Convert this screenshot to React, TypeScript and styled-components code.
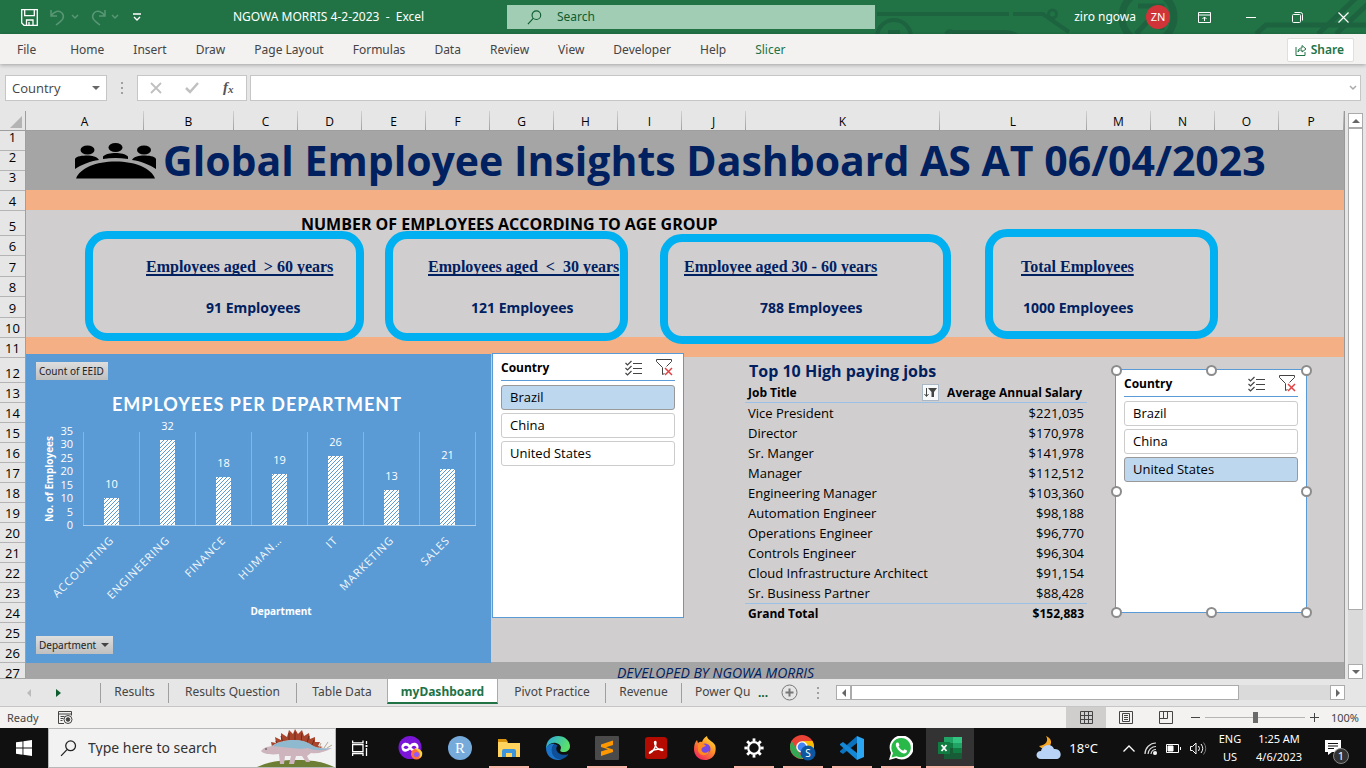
import React from 'react';
import styled, { createGlobalStyle, css } from 'styled-components';

const UI = '"Noto Sans", "Open Sans", "Liberation Sans", sans-serif';
const CELL = '"Open Sans", "Noto Sans", "Liberation Sans", sans-serif';
const NAVY = '#002060';
const BLUE = '#5b9bd5';
const GREEN = '#217346';

const GlobalStyle = createGlobalStyle`
  *, *::before, *::after { box-sizing: border-box; }
  body { margin: 0; font: 12px/16px ${UI}; color: #444; }
  button, input { font: inherit; color: inherit; }
  button { padding: 0; border: 0; background: none; cursor: pointer; }
  a { color: inherit; text-decoration: none; }
  svg { display: block; flex: none; }
  h1, h2, p, ul { margin: 0; padding: 0; }
`;

const App = styled.div`
  display: flex;
  flex-direction: column;
  height: 100vh;
  overflow: hidden;
  background: #e6e6e6;
`;

/* ---------- title bar ---------- */
const TitleBar = styled.header`
  position: relative;
  flex: none;
  display: grid;
  grid-template-columns: 507fr 368fr 491fr;
  align-items: center;
  height: 34px;
  background: ${GREEN};
  color: #fff;
`;
const Circuit = styled.svg`
  position: absolute;
  right: 0;
  top: 0;
`;
const QuickAccess = styled.div`
  display: flex;
  align-items: center;
  padding-left: 21px;
`;
const IconButton = styled.button<{ $gap?: number; $dim?: boolean }>`
  display: flex;
  align-items: center;
  justify-content: center;
  margin-left: ${(p) => p.$gap || 0}px;
  opacity: ${(p) => (p.$dim ? 0.25 : 1)};
`;
const DocTitle = styled.div`
  flex: 1;
  padding-left: 92px;
  white-space: pre;
  line-height: 32px;
  font-size: 12px;
`;
const SearchBox = styled.label`
  position: relative;
  display: flex;
  align-items: center;
  height: 24px;
  padding-left: 20px;
  gap: 13px;
  background: #a0cdb4;
  color: #0e5c2f;
`;
const SearchInput = styled.input`
  flex: 1;
  min-width: 0;
  border: 0;
  outline: 0;
  background: none;
  &::placeholder { color: #0e5c2f; opacity: 1; }
`;
const UserArea = styled.div`
  position: relative;
  display: flex;
  align-items: center;
  justify-content: flex-end;
  padding-right: 17px;
`;
const Avatar = styled.span`
  width: 24px;
  height: 24px;
  margin: 0 28px 0 10px;
  border-radius: 50%;
  background: #d13438;
  font-size: 11px;
  line-height: 24px;
  text-align: center;
`;
const WindowButtons = styled.div`
  display: flex;
  align-items: center;
  gap: 35px;
`;

/* ---------- ribbon tabs ---------- */
const Ribbon = styled.nav`
  position: relative;
  flex: none;
  display: flex;
  align-items: center;
  height: 30px;
  padding: 1px 12px 0 17px;
  background: #f3f2f1;
  box-shadow: 0 1px 4px rgba(0, 0, 0, 0.3);
  font-size: 12px;
`;
const RibbonTab = styled.a<{ $accent?: boolean; $first?: boolean }>`
  margin-right: ${(p) => (p.$first ? 34 : 29)}px;
  color: ${(p) => (p.$accent ? GREEN : '#444')};
`;
const ShareButton = styled.button`
  display: flex;
  align-items: center;
  gap: 4px;
  height: 24px;
  margin-left: auto;
  padding: 0 9px 0 7px;
  border: 1px solid #e1dfdd;
  border-radius: 2px;
  background: #fff;
  color: ${GREEN};
  font-weight: 600;
`;

/* ---------- formula bar ---------- */
const FormulaBar = styled.div`
  flex: none;
  display: flex;
  align-items: center;
  height: 47px;
  padding: 1px 5px 0;
`;
const Boxed = css`
  display: flex;
  align-items: center;
  height: 26px;
  border: 1px solid #c6c6c6;
  background: #fff;
`;
const NameBox = styled.div`
  ${Boxed}
  width: 102px;
  padding: 0 6px;
`;
const NameInput = styled.input`
  flex: 1;
  min-width: 0;
  padding: 0;
  border: 0;
  outline: 0;
  font-family: ${CELL};
  font-size: 13px;
`;
const Dots = styled.svg`
  margin: 0 13px;
`;
const FxBox = styled.div`
  ${Boxed}
  width: 110px;
  justify-content: space-between;
  padding: 0 11px;
  margin-right: 3px;
`;
const FormulaField = styled.div`
  ${Boxed}
  flex: 1;
  padding-right: 3px;
`;
const FormulaInput = styled.input`
  flex: 1;
  border: 0;
  outline: 0;
  background: none;
`;

/* ---------- sheet ---------- */
const Workspace = styled.main`
  flex: 1;
  min-height: 0;
  display: grid;
  grid-template-columns: 1fr 21px;
`;
const Sheet = styled.div`
  min-width: 0;
  min-height: 0;
  display: grid;
  grid-template: 20px 1fr / 26px 1fr;
  overflow: hidden;
  border-right: 1px solid #999;
  border-bottom: 1px solid #a6a6a6;
  color: #000;
  font-family: ${CELL};
  font-size: 13px;
`;
const Corner = styled.div`
  display: flex;
  justify-content: flex-end;
  align-items: flex-end;
  padding: 0 3px 2px;
  border-right: 1px solid #9f9f9f;
  border-bottom: 1px solid #9f9f9f;
`;
const ColumnHeads = styled.div`
  display: grid;
  grid-template-columns: 118px 90px repeat(8, 64px) 194px 147px repeat(3, 64px) minmax(64px, 1fr);
  border-bottom: 1px solid #9f9f9f;
  font-size: 12px;
`;
const ColumnHead = styled.div`
  text-align: center;
  line-height: 21px;
  border-right: 1px solid;
  border-image: linear-gradient(#d4d4d4, #999) 1;
`;
const RowHeads = styled.div`
  min-height: 0;
  overflow: hidden;
  border-right: 1px solid #9f9f9f;
`;
const RowHead = styled.div<{ $h: number; $raised?: boolean }>`
  display: flex;
  align-items: flex-end;
  justify-content: center;
  height: ${(p) => p.$h}px;
  padding-bottom: ${(p) => (p.$raised ? 7 : 0)}px;
  border-top: 1px solid #b4b4b4;
  line-height: ${(p) => (p.$raised ? 12 : 18)}px;
  &:first-child { border-top: 0; }
`;
const Canvas = styled.div`
  min-width: 0;
  min-height: 0;
  display: flex;
  flex-direction: column;
  overflow: hidden;
  background: #d0cece;
`;
const TitleBand = styled.div`
  flex: none;
  display: flex;
  align-items: center;
  gap: 7px;
  height: 59px;
  padding-left: 49px;
  background: #a5a5a5;
`;
const SheetTitle = styled.h1`
  color: ${NAVY};
  font: bold 41px/59px ${CELL};
  white-space: nowrap;
`;
const AccentBand = styled.div`
  flex: none;
  height: 20px;
  background: #f4b084;
`;
const AgeSection = styled.section`
  position: relative;
  z-index: 1;
  flex: none;
  height: 127px;
`;
const AgeHeading = styled.h2`
  height: 21px;
  padding-left: 275px;
  font: bold 16px/28px ${CELL};
  white-space: nowrap;
`;
const AgeCards = styled.div`
  display: flex;
  padding-left: 59px;
`;
const AgeCard = styled.div<{ $w: number; $gap: number; $drop: number }>`
  position: relative;
  flex: none;
  width: ${(p) => p.$w}px;
  height: 110px;
  margin-right: ${(p) => p.$gap}px;
  padding-top: 26px;
  color: ${NAVY};
  white-space: pre;
  &::before {
    content: '';
    position: absolute;
    top: ${(p) => p.$drop}px;
    left: 0;
    width: 100%;
    height: 100%;
    border: 8px solid #00b0f0;
    border-radius: 22px;
  }
`;
const AgeLabel = styled.p<{ $x: number }>`
  padding-left: ${(p) => p.$x}px;
  font: bold 16px/20px "Liberation Serif", serif;
  text-decoration: underline;
  text-decoration-thickness: 2px;
  text-underline-offset: 2px;
  text-decoration-skip-ink: none;
`;
const AgeValue = styled.p<{ $x: number }>`
  margin-top: 21px;
  padding-left: ${(p) => p.$x}px;
  font: bold 14px/20px ${CELL};
`;
const Board = styled.section`
  position: relative;
  z-index: 1;
  flex: none;
  display: flex;
  align-items: flex-start;
  height: 305px;
`;
const ChartPanel = styled.figure`
  position: relative;
  flex: none;
  width: 465px;
  height: 309px;
  margin: -3px 1px 0 0;
  background: ${BLUE};
`;
const FieldButton = styled.button<{ $bottom?: boolean }>`
  position: absolute;
  left: 10px;
  ${(p) => (p.$bottom ? 'bottom: 9px' : 'top: 8px')};
  display: flex;
  align-items: center;
  gap: 5px;
  height: 18px;
  padding: 0 4px 0 3px;
  background: linear-gradient(#dedede, #bfbfbf);
  color: #222;
  font: 10px/18px ${UI};
`;
const SlicerPanel = styled.section<{ $h: number; $top: number }>`
  position: relative;
  flex: none;
  width: 192px;
  height: ${(p) => p.$h}px;
  margin-top: ${(p) => p.$top}px;
  padding: 0 8px;
  border: 1px solid ${BLUE};
  background: #fff;
`;
const SlicerHead = styled.header`
  display: flex;
  align-items: center;
  height: 27px;
  margin-bottom: 4px;
  padding-top: 1px;
  border-bottom: 1px solid ${BLUE};
`;
const SlicerTitle = styled.h2`
  flex: 1;
  font: bold 12px/26px ${CELL};
`;
const SlicerItem = styled.button<{ $on?: boolean }>`
  display: block;
  width: 100%;
  height: 25px;
  margin-bottom: 3px;
  padding: 0 0 2px 8px;
  border: 1px solid ${(p) => (p.$on ? '#999' : '#ccc')};
  border-radius: 3px;
  background: ${(p) => (p.$on ? '#bdd7ee' : '#fff')};
  text-align: left;
  line-height: 20px;
`;
const Handle = styled.i<{ $x: string; $y: string }>`
  position: absolute;
  left: ${(p) => p.$x};
  top: ${(p) => p.$y};
  width: 11px;
  height: 11px;
  margin: -5px 0 0 -5px;
  border: 2px solid #8c8c8c;
  border-radius: 50%;
  background: #fff;
`;
const Pivot = styled.table`
  flex: none;
  width: 342px;
  margin: 0 28px 0 61px;
  border-collapse: collapse;
  table-layout: fixed;
  caption {
    height: 25px;
    padding-left: 4px;
    color: ${NAVY};
    font: bold 16px/28px ${CELL};
    text-align: left;
  }
  th, td {
    height: 20px;
    padding: 1px 3px 0;
    line-height: 19px;
    text-align: left;
    white-space: nowrap;
  }
  th { font-size: 12px; }
  td + td, tfoot th + td { text-align: right; }
  thead th { border-bottom: 1px solid #9bc2e6; }
  tfoot tr > * { border-top: 1px solid #9bc2e6; font-size: 12px; font-weight: bold; padding-top: 0; }
`;
const PivotHead = styled.div`
  display: flex;
  align-items: center;
  justify-content: space-between;
  margin-right: 2px;
`;
const FilterButton = styled.button`
  width: 17px;
  height: 17px;
  display: flex;
  align-items: center;
  justify-content: center;
  border: 1px solid #aab7c4;
  background: #f6f8fa;
`;
const CreditBand = styled.div`
  flex: 1;
  min-height: 0;
  padding-left: 591px;
  background: #a5a5a5;
  color: ${NAVY};
  font: italic 14px/22px ${CELL};
  white-space: nowrap;
`;

/* ---------- scroll bars ---------- */
const VScroll = styled.div`
  display: flex;
  flex-direction: column;
  width: 15px;
  margin: 2px 0 0 3px;
`;
const HScroll = styled.div`
  display: flex;
  flex: 1;
  height: 15px;
`;
const ScrollButton = styled.button`
  flex: none;
  width: 15px;
  height: 15px;
  display: flex;
  align-items: center;
  justify-content: center;
  border: 1px solid #ababab;
  background: #fff;
`;
const Track = styled.div`
  flex: 1;
  display: flex;
  background: #dadada;
`;
const VThumb = styled.div`
  width: 100%;
  height: 90%;
  border: 1px solid #ababab;
  background: #fff;
`;
const HThumb = styled.div`
  width: 81%;
  border: 1px solid #ababab;
  background: #fff;
`;

/* ---------- sheet tabs and status ---------- */
const TabStrip = styled.nav`
  flex: none;
  display: flex;
  align-items: center;
  height: 28px;
  padding-right: 21px;
  border-bottom: 1px solid #c6c6c6;
`;
const TabNav = styled.div`
  display: flex;
  align-items: center;
  gap: 25px;
  width: 100px;
  padding-left: 27px;
`;
const SheetTab = styled.a<{ $w: number; $active?: boolean; $bare?: boolean }>`
  flex: none;
  width: ${(p) => p.$w}px;
  height: 20px;
  border-left: 1px solid ${(p) => (p.$bare ? 'transparent' : '#9f9f9f')};
  text-align: center;
  line-height: 18px;
  white-space: nowrap;
  ${(p) => p.$active && css`
    align-self: flex-start;
    height: 25px;
    border-left: 1px solid #ababab;
    border-right: 1px solid #ababab;
    border-bottom: 2px solid ${GREEN};
    background: #fff;
    color: ${GREEN};
    font-weight: bold;
    line-height: 25px;
  `}
`;
const LastTab = styled(SheetTab)`
  padding-left: 13px;
  text-align: left;
`;
const TabMore = styled.button`
  margin: 0 13px 0 8px;
  color: #0f5c30;
  font-weight: bold;
`;
const StatusBar = styled.footer`
  flex: none;
  display: flex;
  align-items: center;
  height: 21px;
  padding: 0 7px;
  background: #f3f2f1;
  font-size: 11px;
`;
const Spacer = styled.div`
  flex: 1;
`;
const ViewButton = styled.button<{ $on?: boolean }>`
  display: flex;
  align-items: center;
  justify-content: center;
  width: 40px;
  height: 21px;
  background: ${(p) => (p.$on ? '#cfcecd' : 'none')};
`;
const ZoomButton = styled.button`
  width: 19px;
  display: flex;
  align-items: center;
  justify-content: center;
`;
const ZoomSlider = styled.input`
  appearance: none;
  width: 100px;
  height: 13px;
  margin: 0;
  background: linear-gradient(#b5b5b5, #b5b5b5) center / 100% 1px no-repeat;
  &::-webkit-slider-thumb {
    appearance: none;
    width: 5px;
    height: 11px;
    background: #6a6a6a;
  }
`;
const ZoomValue = styled.span`
  width: 35px;
  text-align: right;
`;

/* ---------- taskbar ---------- */
const Taskbar = styled.footer`
  flex: none;
  display: flex;
  align-items: stretch;
  height: 40px;
  background: #101010;
  color: #fff;
`;
const StartButton = styled.button`
  width: 48px;
  display: flex;
  align-items: center;
  justify-content: center;
`;
const TaskSearch = styled.label`
  display: flex;
  align-items: center;
  width: 288px;
  padding-left: 11px;
  gap: 11px;
  border: 1px solid #b8b8b8;
  background: #f2f2f2;
  color: #222;
`;
const TaskInput = styled.input`
  flex: 1;
  min-width: 0;
  padding: 0;
  border: 0;
  outline: 0;
  background: none;
  font-size: 14px;
  &::placeholder { color: #333; opacity: 1; }
`;
const TaskApps = styled.div`
  display: flex;
  gap: 1px;
`;
const TaskApp = styled.button<{ $open?: boolean; $active?: boolean; $gap?: boolean }>`
  position: relative;
  display: flex;
  align-items: center;
  justify-content: center;
  width: 48px;
  margin-right: ${(p) => (p.$gap ? 2 : 0)}px;
  background: ${(p) => (p.$active ? '#333' : 'none')};
  &::after {
    content: '';
    position: absolute;
    bottom: 0;
    left: ${(p) => (p.$active ? 0 : 4)}px;
    right: ${(p) => (p.$active ? 0 : 4)}px;
    height: 2px;
    background: ${(p) => (p.$open || p.$active ? '#f7b5a8' : 'transparent')};
  }
`;
const Tray = styled.div`
  display: flex;
  align-items: center;
  margin-left: auto;
  padding-right: 24px;
`;
const Weather = styled.button`
  display: flex;
  align-items: center;
  gap: 8px;
  margin-right: 25px;
  font-size: 13px;
`;
const TrayIcons = styled.div`
  display: flex;
  align-items: center;
  gap: 9px;
  margin-right: 10px;
`;
const TrayText = styled.div<{ $w: number }>`
  width: ${(p) => p.$w}px;
  font-size: 11px;
  line-height: 18px;
  text-align: center;
  white-space: nowrap;
`;
const Notice = styled.button`
  position: relative;
  margin-left: 10px;
`;
const NoticeCount = styled.span`
  position: absolute;
  left: 8px;
  top: 8px;
  width: 16px;
  height: 16px;
  border: 1px solid #888;
  border-radius: 50%;
  background: #333;
  font-size: 11px;
  line-height: 14px;
`;

/* ---------- data ---------- */
const MENU = ['File', 'Home', 'Insert', 'Draw', 'Page Layout', 'Formulas', 'Data', 'Review', 'View', 'Developer', 'Help', 'Slicer'];
const COLUMNS = 'ABCDEFGHIJKLMNOP'.split('');
const ROW_HEIGHTS = [19, 20, 20, 20, 25, 20, 21, 20, 21, 20, 20, 25, ...Array(14).fill(20), 20];
const AGE_CARDS = [
  { label: 'Employees aged  > 60 years', value: '91 Employees', w: 279, gap: 21, drop: 0, lx: 61, vx: 121 },
  { label: 'Employees aged  <  30 years', value: '121 Employees', w: 243, gap: 32, drop: 0, lx: 43, vx: 86 },
  { label: 'Employee aged 30 - 60 years', value: '788 Employees', w: 291, gap: 34, drop: 3, lx: 24, vx: 100 },
  { label: 'Total Employees', value: '1000 Employees', w: 233, gap: 0, drop: -2, lx: 36, vx: 38 },
];
const JOBS = [
  ['Vice President', '$221,035'], ['Director', '$170,978'], ['Sr. Manger', '$141,978'], ['Manager', '$112,512'],
  ['Engineering Manager', '$103,360'], ['Automation Engineer', '$98,188'], ['Operations Engineer', '$96,770'],
  ['Controls Engineer', '$96,304'], ['Cloud Infrastructure Architect', '$91,154'], ['Sr. Business Partner', '$88,428'],
];
const DEPARTMENTS: [string, number][] = [
  ['ACCOUNTING', 10], ['ENGINEERING', 32], ['FINANCE', 18], ['HUMAN…', 19], ['IT', 26], ['MARKETING', 13], ['SALES', 21],
];
const SHEETS = [
  { name: 'Results', w: 68 }, { name: 'Results Question', w: 128 }, { name: 'Table Data', w: 91 },
  { name: 'myDashboard', w: 111, active: true }, { name: 'Pivot Practice', w: 107, bare: true },
  { name: 'Revenue', w: 76 },
];

/* ---------- drawings ---------- */
const Arrow = ({ dir, color = '#666' }: { dir: 'up' | 'down' | 'left' | 'right'; color?: string }) => {
  const d = { up: 'M0 6L4 2L8 6Z', down: 'M0 2L4 6L8 2Z', left: 'M6 0L2 4L6 8Z', right: 'M2 0L6 4L2 8Z' }[dir];
  return <svg width="8" height="8"><path d={d} fill={color} /></svg>;
};
const Chevron = ({ color = 'currentColor' }) => (
  <svg width="8" height="6" fill="none" stroke={color} strokeWidth="1.5"><path d="M1 1l3 3l3-3" /></svg>
);
const Magnifier = ({ size }: { size: number }) => (
  <svg width={size} height={size} viewBox="0 0 16 16" fill="none" stroke="currentColor" strokeWidth="1.2">
    <circle cx="10" cy="5.5" r="4.6" /><path d="M6.6 9L1 15" />
  </svg>
);

function SlicerIcons() {
  return (
    <>
      <IconButton aria-label="Multi-select">
        <svg width="17" height="16" fill="none" stroke="#444">
          <path d="M8 3.5h9M8 8.5h9M8 13.5h9" />
          <path d="M.5 3l2 2l4-4M.5 8l2 2l4-4M.5 13l2 2l4-4" strokeWidth="1.2" />
        </svg>
      </IconButton>
      <IconButton aria-label="Clear filter" $gap={14}>
        <svg width="19" height="17" fill="none" stroke="#444">
          <path d="M.5 .5h15v2l-5 5M.5 2.5l6 6v7M.5 .5v2M6.5 15.5l2-1" />
          <path d="M9 9l7 7M16 9l-7 7" stroke="#e04343" strokeWidth="1.5" />
        </svg>
      </IconButton>
    </>
  );
}

function Slicer({ height, top, selected, handles }: { height: number; top: number; selected: string; handles?: boolean }) {
  return (
    <SlicerPanel $h={height} $top={top}>
      <SlicerHead>
        <SlicerTitle>Country</SlicerTitle>
        <SlicerIcons />
      </SlicerHead>
      {['Brazil', 'China', 'United States'].map((name) => (
        <SlicerItem key={name} $on={name === selected}>{name}</SlicerItem>
      ))}
      {handles && ['0%', '50%', '100%'].map((y) => ['0%', '50%', '100%'].map((x) => (
        x === '50%' && y === '50%' ? null : <Handle key={x + y} $x={x} $y={y} />
      )))}
    </SlicerPanel>
  );
}

function DepartmentChart() {
  const base = 171;
  return (
    <ChartPanel>
      <svg width="465" height="309" fontFamily={CELL} fill="#fff">
        <defs>
          <pattern id="hatch" width="4" height="4" patternUnits="userSpaceOnUse">
            <rect width="4" height="4" fill="#fff" />
            <path d="M-1 1L1 -1M0 4L4 0M3 5L5 3" stroke={BLUE} />
          </pattern>
        </defs>
        <text x="231" y="57" textAnchor="middle" fontFamily="Lato" fontSize="18" fontWeight="bold" letterSpacing="1">EMPLOYEES PER DEPARTMENT</text>
        {Array.from({ length: 8 }, (_, i) => (
          <path key={i} d={`M${57.5 + i * 56} 78V${base}`} stroke="#84b4e0" />
        ))}
        <path d={`M57 ${base + 0.5}H450`} stroke="#b0cfeb" />
        {[0, 5, 10, 15, 20, 25, 30, 35].map((n) => (
          <text key={n} x="47" y={175 - n * 2.69} textAnchor="end" fontSize="11">{n}</text>
        ))}
        {DEPARTMENTS.map(([name, n], i) => {
          const cx = 85.5 + i * 56;
          const h = Math.round(n * 2.67);
          return (
            <g key={name}>
              <rect x={cx - 7.5} y={base - h} width="15" height={h} fill="url(#hatch)" />
              <text x={cx} y={base - h - 10} textAnchor="middle" fontSize="11">{n}</text>
              <text transform={`translate(${cx + 3} 187) rotate(-45)`} textAnchor="end" fontSize="11" letterSpacing="1" fill="#f2f7fc">{name}</text>
            </g>
          );
        })}
        <text transform="translate(27 125) rotate(-90)" textAnchor="middle" fontSize="10" fontWeight="bold">No. of Employees</text>
        <text x="255" y="261" textAnchor="middle" fontSize="10" fontWeight="bold">Department</text>
      </svg>
      <FieldButton>Count of EEID</FieldButton>
      <FieldButton $bottom>Department <Arrow dir="down" color="#444" /></FieldButton>
    </ChartPanel>
  );
}

const PeopleIcon = () => (
  <svg width="81" height="38">
    <ellipse cx="12.5" cy="8" rx="7" ry="4.6" /><ellipse cx="40.5" cy="5.5" rx="7" ry="4.6" /><ellipse cx="69" cy="8" rx="7" ry="4.6" />
    <path d="M0 17C1 14 8 13.500 12 13.500C17 13.500 22 14.500 24 18C15 19 6 23 0 27ZM81 17C80 14 73 13.500 69 13.500C64 13.500 59 14.500 57 18C66 19 75 23 81 27ZM28 17V14.500C30 12 36 11 40.500 11S51 12 53 14.500V17Q40 15 28 17Z" />
    <path d="M1 36.500C5 26 21 19.500 40.500 19.500S76 26 80 36.500Z" />
  </svg>
);

const Stegosaurus = () => (
  <svg width="78" height="38" viewBox="0 0 78 38">
    <path d="M0 38C12 33 20 31 40 31S68 34 77 38Z" fill="#6c7f35" />
    <path d="M15 18L14 13L19 14L18 8L24 11L24 4L30 8L32 1L36 5L38 0L41 5L45 1L47 7L52 4L53 10L58 8L58 13L63 13L61 17L66 18L60 20Z" fill="#a8452c" />
    <path d="M20 16l-1-4M26 14l-2-7M32 12V4M38 12V3M44 13l1-9M50 14l2-7M55 16l2-5" stroke="#6e2a1b" />
    <path d="M4 22C8 17 12 18 15 17C22 11 42 8 53 15C60 20 67 20 75 19C68 23 61 25 54 24L50 27L53 33H49L45 27L39 27L37 35H32L34 27L28 27L27 35H23L22 25C14 26 6 25 4 22Z" fill="#cdb4bd" />
    <path d="M15 17C24 11 43 8 53 15C60 20 66 20 75 19C66 22 58 22 51 19C40 21 28 18 15 17Z" fill="#8fb9cf" />
    <path d="M62 19l2-5M67 19l4-6M70 19l5-3" stroke="#b7a894" />
    <circle cx="9" cy="20" r=".8" fill="#333" />
  </svg>
);

const MaskApp = () => (
  <svg width="26" height="26" viewBox="0 0 26 26">
    <circle cx="12" cy="12.500" r="11.500" fill="#7b16d9" />
    <path d="M12 10C9 6 3 8 3.500 12.500C4 18 9 17.500 12 14.500C15 17.500 20 18 20.500 12.500C21 8 15 6 12 10Z" fill="#fff" />
    <ellipse cx="8" cy="12.300" rx="2.200" ry="1.600" fill="#7b16d9" /><ellipse cx="16" cy="12.300" rx="2.200" ry="1.600" fill="#7b16d9" />
    <circle cx="18.500" cy="19" r="5.500" fill="#ff7139" /><circle cx="18.500" cy="19.500" r="2.500" fill="#9059ff" />
    <path d="M17 14c3-1 5 0 7 3c1 3-1 6-3 6c3-4 0-7-4-9" fill="#ffd43b" />
  </svg>
);
const RApp = () => (
  <svg width="24" height="24"><circle cx="12" cy="12" r="12" fill="#75aadb" />
    <text x="12" y="17" textAnchor="middle" fontFamily="Liberation Serif" fontSize="15" fill="#fff">R</text></svg>
);
const FolderApp = () => (
  <svg width="22" height="19"><path d="M0 1h8l2 3h12v14H0Z" fill="#ffd35c" /><path d="M0 0h8l2 3H0Z" fill="#d9940f" />
    <path d="M4 18v-6q0-2 2-2h10q2 0 2 2v6h-4v-4H8v4Z" fill="#3a95dd" /></svg>
);
const EdgeApp = () => (
  <svg width="24" height="24" viewBox="0 0 24 24">
    <defs><linearGradient id="edge" x2="1" y2=".4"><stop stopColor="#2aa7e6" /><stop offset="1" stopColor="#5ae06a" /></linearGradient></defs>
    <path d="M0 13C0 5 5 0 12 0C19 0 24 5 24 10C24 14 21 16 17.500 16C14 16 14 14.500 14.500 13.500C16 11 14 8 10 7C6 6 2 8 0 13Z" fill="url(#edge)" />
    <path d="M0 12C2 8 6 7 9 8C6 10 5 14 7 18C9 22 14 24 17 23C10 26 0 22 0 12Z" fill="#1b74c9" />
    <path d="M9 8C4 11 5 18 9 21.500C13 25 20 23 22.500 18C19 19.500 15 19 12.500 17C10 15 9.500 12 11.500 9.500Z" fill="#0d5099" />
  </svg>
);
const SublimeApp = () => (
  <svg width="24" height="24"><rect width="24" height="24" rx="1" fill="#4a4a4a" />
    <path d="M6 8.500L18 4.500V9L11 11.200L18 13.500V16L6 20V15.500L13 13.200L6 11Z" fill="#ff9800" /></svg>
);
const AcrobatApp = () => (
  <svg width="22" height="22"><rect width="22" height="22" rx="3" fill="#b30b00" />
    <path d="M5 16C9 14 11 9 11 5.500C11 4 9.500 4 9.500 5.500C9.500 9 13 13 17 13.500C18.500 13.500 18 12 16 12C12 12 7 13.500 5 15C4 16 4.500 16.500 5 16Z" fill="none" stroke="#fff" strokeWidth="1.400" /></svg>
);
const FirefoxApp = () => (
  <svg width="24" height="24" viewBox="0 0 24 24">
    <defs><linearGradient id="fox" x1="1" y1="0" x2=".3" y2="1"><stop stopColor="#fff04a" /><stop offset=".45" stopColor="#ff9a22" /><stop offset="1" stopColor="#f1295c" /></linearGradient></defs>
    <path d="M1 13C1 9 2 6 4 4L5 7C7 5 9 6 9 6C10 3 12 1 14 0C14 4 20 5 22 9C24 14 22 24 12 24C5 24 1 19 1 13Z" fill="url(#fox)" />
    <circle cx="12" cy="13" r="5.500" fill="#7548e5" />
    <path d="M5 8C8 7 12 8 13 10C11 11 9 11 8.500 13C8 17 13 18 16 15C16 20 7 21 5 15Z" fill="#ff8a22" />
  </svg>
);
const GearApp = () => (
  <svg width="20" height="20" viewBox="-10 -10 20 20" stroke="#fff" fill="none">
    <circle r="5.800" strokeWidth="2.200" />
    {[0, 45, 90, 135, 180, 225, 270, 315].map((a) => <path key={a} d="M0 -6.500V-9.600" strokeWidth="2.800" transform={`rotate(${a})`} />)}
  </svg>
);
const ChromeApp = () => (
  <svg width="26" height="26" viewBox="0 0 26 26">
    <circle cx="12" cy="12" r="12" fill="#ea4335" />
    <path d="M1.600 6L8 16L13 24C5 24 0 18 0 12C0 9.500 .6 8 1.600 6Z" fill="#34a853" />
    <path d="M22.500 6H12L17.500 14.500L12 24C19 24 24 19 24 12C24 9.500 23.500 8 22.500 6Z" fill="#fbbc05" />
    <circle cx="12" cy="12" r="5.800" fill="#fff" /><circle cx="12" cy="12" r="4.400" fill="#4285f4" />
    <circle cx="18" cy="18" r="7.500" fill="#0b57a0" />
    <text x="18" y="22" textAnchor="middle" fontFamily="Noto Sans" fontSize="10" fill="#fff">S</text>
  </svg>
);
const CodeApp = () => (
  <svg width="24" height="24" viewBox="0 0 24 24">
    <path d="M17 0L24 3V21L17 24Z" fill="#2aa6f2" />
    <path d="M17 0V7L3 18L0 16V15Z" fill="#0b72bd" /><path d="M17 24V17L3 6L0 8V9Z" fill="#1488d6" />
  </svg>
);
const WhatsAppIcon = () => (
  <svg width="24" height="24" viewBox="0 0 24 24">
    <path d="M0 24L2 17A12 12 0 1 1 7 22Z" fill="#fff" />
    <path d="M2.500 21.500L4 17A9.700 9.700 0 1 1 7.500 20.200Z" fill="#29b948" />
    <path d="M8 6.500C7 7 6.500 8.500 7 10C8.500 14 12 17 15 17.500C17 17.500 18 16.500 18 14.500L15.500 13.300L14.200 14.800C12 14 10.500 12.500 9.500 10.600L10.500 9.300L9.500 6.700Z" fill="#fff" />
  </svg>
);
const ExcelApp = () => (
  <svg width="24" height="22"><path d="M6 0h9v11H6Z" fill="#21a366" /><path d="M15 0h9v6h-9Z" fill="#33c481" /><path d="M6 6h9v5H6Z" fill="#107c41" />
    <path d="M15 6h9v5h-9Z" fill="#21a366" /><path d="M6 11h9v11H6Z" fill="#185c37" /><path d="M15 11h9v5h-9Z" fill="#107c41" /><path d="M15 16h9v6h-9Z" fill="#185c37" />
    <rect y="5" width="12" height="12" fill="#107c41" /><path d="M3.500 8L8.500 14M8.500 8L3.500 14" stroke="#fff" strokeWidth="1.800" /></svg>
);
const TaskView = () => (
  <svg width="16" height="17" fill="none" stroke="#fff" strokeWidth="1.300">
    <path d="M.6 4.600h10.400v7H.6ZM.6 16v-2.500h10.400V16M.6 .5v2.300h10.400V.5M14.500 1v3M14.500 8v8" /><rect x="13.500" y="5" width="2" height="2" fill="#fff" stroke="none" />
  </svg>
);

export default function ExcelDashboard() {
  return (
    <App>
      <GlobalStyle />
      <TitleBar>
        <Circuit width="500" height="34" fill="none" stroke="#1d6340" strokeWidth="4">
          <circle cx="28" cy="37" r="17" /><path d="M22 32h12M11 14h132M80 34q2-4 7-2h50q10 0 14 4M147 14h30l26 18" />
          <circle cx="186.500" cy="14" r="4" strokeWidth="3" /><circle cx="282" cy="17" r="26" strokeWidth="7" />
          <path d="M272 6h24v24M296 6l-26 28M390 34l10-9h100M452 34l38-36M470 34l34-32" strokeWidth="5" />
        </Circuit>
        <QuickAccess>
          <IconButton aria-label="Save">
            <svg width="17" height="17" fill="none" stroke="#fff" strokeWidth="1.300"><path d="M.7 .7h15.600v15.600H3L.7 14ZM3.700 .7v6h9.600v-6M5.500 16v-5h6.500v5M8 13v3" /></svg>
          </IconButton>
          <IconButton aria-label="Undo" $gap={12} $dim>
            <svg width="16" height="17" fill="none" stroke="#fff" strokeWidth="1.500"><path d="M1 1v6h6M1 7C4 2 9 1 12 4C16 9 11 12 6 16" /></svg>
          </IconButton>
          <IconButton aria-label="Undo list" $gap={5} $dim><Chevron /></IconButton>
          <IconButton aria-label="Redo" $gap={11} $dim>
            <svg width="16" height="17" fill="none" stroke="#fff" strokeWidth="1.500"><path d="M15 1v6H9M15 7C12 2 7 1 4 4C0 9 5 12 10 16" /></svg>
          </IconButton>
          <IconButton aria-label="Redo list" $gap={5} $dim><Chevron /></IconButton>
          <IconButton aria-label="Customize toolbar" $gap={14}>
            <svg width="8" height="8" fill="none" stroke="#fff" strokeWidth="1.300"><path d="M0 1h8M1 4l3 3l3-3" /></svg>
          </IconButton>
          <DocTitle>NGOWA MORRIS 4-2-2023  -  Excel</DocTitle>
        </QuickAccess>
        <SearchBox>
          <Magnifier size={15} />
          <SearchInput placeholder="Search" aria-label="Search" />
        </SearchBox>
        <UserArea>
          <span>ziro ngowa</span>
          <Avatar>ZN</Avatar>
          <WindowButtons>
            <IconButton aria-label="Ribbon display">
              <svg width="13" height="11" fill="none" stroke="#fff"><path d="M.5 .5h12v10H.5ZM.5 3h12M6.500 9V5M4.500 7l2-2l2 2" /></svg>
            </IconButton>
            <IconButton aria-label="Minimize"><svg width="11" height="11" stroke="#fff"><path d="M0 5.500h10" /></svg></IconButton>
            <IconButton aria-label="Restore">
              <svg width="11" height="11" fill="none" stroke="#fff"><rect x=".5" y="2.500" width="8" height="8" rx="1" /><path d="M2.500 .5h6q2 0 2 2v6" /></svg>
            </IconButton>
            <IconButton aria-label="Close"><svg width="11" height="11" stroke="#fff" strokeWidth="1.200"><path d="M.5 .5l10 10M10.500 .5l-10 10" /></svg></IconButton>
          </WindowButtons>
        </UserArea>
      </TitleBar>

      <Ribbon>
        {MENU.map((m) => <RibbonTab key={m} href="#" $first={m === 'File'} $accent={m === 'Slicer'}>{m}</RibbonTab>)}
        <ShareButton>
          <svg width="12" height="12" fill="none" stroke="currentColor"><path d="M1 3v8.500h9V8M3 8c0-3 2-4 4-4V1.500L11 5L7 8V6C5 6 4 6 3 8" /></svg>
          Share
        </ShareButton>
      </Ribbon>

      <FormulaBar>
        <NameBox>
          <NameInput defaultValue="Country" aria-label="Name box" />
          <IconButton aria-label="Names"><Arrow dir="down" /></IconButton>
        </NameBox>
        <Dots width="4" height="12" fill="#a0a0a0"><path d="M1 0h2v2H1ZM1 5h2v2H1ZM1 10h2v2H1Z" /></Dots>
        <FxBox>
          <IconButton aria-label="Cancel"><svg width="14" height="12" stroke="#c0c0c0" strokeWidth="1.800"><path d="M2 1l10 10M12 1l-10 10" /></svg></IconButton>
          <IconButton aria-label="Enter"><svg width="14" height="12" fill="none" stroke="#c0c0c0" strokeWidth="2.500"><path d="M1 6l4 4l8-9" /></svg></IconButton>
          <IconButton aria-label="Insert function">
            <svg width="14" height="16" fontFamily="Liberation Serif" fontStyle="italic" fontWeight="bold" fill="#555"><text x="2" y="12" fontSize="15">f</text><text x="7" y="13" fontSize="11">x</text></svg>
          </IconButton>
        </FxBox>
        <FormulaField>
          <FormulaInput aria-label="Formula" />
          <IconButton aria-label="Expand formula bar"><Chevron color="#aaa" /></IconButton>
        </FormulaField>
      </FormulaBar>

      <Workspace>
        <Sheet>
          <Corner><svg width="12" height="12"><path d="M12 0v12H0Z" fill="#b4b4b4" /></svg></Corner>
          <ColumnHeads>{COLUMNS.map((c) => <ColumnHead key={c}>{c}</ColumnHead>)}</ColumnHeads>
          <RowHeads>
            {ROW_HEIGHTS.map((h, i) => <RowHead key={i} $h={h} $raised={i < 3}>{i + 1}</RowHead>)}
          </RowHeads>
          <Canvas>
            <TitleBand>
              <PeopleIcon />
              <SheetTitle>Global Employee Insights Dashboard AS AT 06/04/2023</SheetTitle>
            </TitleBand>
            <AccentBand />
            <AgeSection>
              <AgeHeading>NUMBER OF EMPLOYEES ACCORDING TO AGE GROUP</AgeHeading>
              <AgeCards>
                {AGE_CARDS.map((c) => (
                  <AgeCard key={c.label} $w={c.w} $gap={c.gap} $drop={c.drop}>
                    <AgeLabel $x={c.lx}>{c.label}</AgeLabel>
                    <AgeValue $x={c.vx}>{c.value}</AgeValue>
                  </AgeCard>
                ))}
              </AgeCards>
            </AgeSection>
            <AccentBand />
            <Board>
              <DepartmentChart />
              <Slicer height={265} top={-4} selected="Brazil" />
              <Pivot>
                <caption>Top 10 High paying jobs</caption>
                <colgroup><col width="174" /><col /></colgroup>
                <thead>
                  <tr>
                    <th>Job Title</th>
                    <th>
                      <PivotHead>
                        <FilterButton aria-label="Sort and filter">
                          <svg width="13" height="11"><path d="M2.500 1v8M.5 7l2 2.500l2-2.500" fill="none" stroke="#444" /><path d="M4 1h9l-3 4v5H7.500V5Z" fill="#444" /></svg>
                        </FilterButton>
                        <span>Average Annual Salary</span>
                      </PivotHead>
                    </th>
                  </tr>
                </thead>
                <tbody>
                  {JOBS.map(([job, pay]) => <tr key={job}><td>{job}</td><td>{pay}</td></tr>)}
                </tbody>
                <tfoot><tr><th>Grand Total</th><td>$152,883</td></tr></tfoot>
              </Pivot>
              <Slicer height={244} top={12} selected="United States" handles />
            </Board>
            <CreditBand>DEVELOPED BY NGOWA MORRIS</CreditBand>
          </Canvas>
        </Sheet>
        <VScroll>
          <ScrollButton aria-label="Scroll up"><Arrow dir="up" /></ScrollButton>
          <Track><VThumb /></Track>
          <ScrollButton aria-label="Scroll down"><Arrow dir="down" /></ScrollButton>
        </VScroll>
      </Workspace>

      <TabStrip>
        <TabNav>
          <IconButton aria-label="Previous sheets"><svg width="4" height="8"><path d="M4 0v8L0 4Z" fill="#bbb" /></svg></IconButton>
          <IconButton aria-label="Next sheets"><svg width="5" height="8"><path d="M0 0v8L5 4Z" fill="#0f5c30" /></svg></IconButton>
        </TabNav>
        {SHEETS.map((s) => <SheetTab key={s.name} href="#" $w={s.w} $active={s.active} $bare={s.bare}>{s.name}</SheetTab>)}
        <LastTab href="#" $w={69}>Power Qu</LastTab>
        <TabMore>...</TabMore>
        <IconButton aria-label="New sheet">
          <svg width="17" height="17" fill="none" stroke="#777"><circle cx="8.500" cy="8.500" r="7.500" /><path d="M8.500 4.500v8M4.500 8.500h8" strokeWidth="2" /></svg>
        </IconButton>
        <Dots width="12" height="12" fill="#a0a0a0"><path d="M6 0h2v2H6ZM6 5h2v2H6ZM6 10h2v2H6Z" /></Dots>
        <HScroll>
          <ScrollButton aria-label="Scroll left"><Arrow dir="left" /></ScrollButton>
          <Track><HThumb /></Track>
          <ScrollButton aria-label="Scroll right"><Arrow dir="right" /></ScrollButton>
        </HScroll>
      </TabStrip>

      <StatusBar>
        <span>Ready</span>
        <IconButton aria-label="Record macro" $gap={19}>
          <svg width="15" height="13" fill="none" stroke="#444"><path d="M6 12.500H.5V.5h13v4M.5 3h13M2.500 5.500h4M2.500 7.500h3M2.500 9.500h2" /><circle cx="10" cy="8.500" r="4" /><circle cx="10" cy="8.500" r="1.800" fill="#444" /></svg>
        </IconButton>
        <Spacer />
        <ViewButton $on aria-label="Normal"><svg width="13" height="13" fill="none" stroke="#444"><path d="M.5 .5h12v12H.5ZM4.500 .5v12M8.500 .5v12M.5 4.500h12M.5 8.500h12" /></svg></ViewButton>
        <ViewButton aria-label="Page layout"><svg width="14" height="13" fill="none" stroke="#444"><path d="M.5 .5h13v12H.5ZM3.500 2.500h7v8h-7ZM5 4.500h4M5 6.500h4M5 8.500h4" /></svg></ViewButton>
        <ViewButton aria-label="Page break"><svg width="14" height="13" fill="none" stroke="#444"><path d="M.5 .5h13v12H.5ZM.5 7.500h8v-7M4.500 .5v7" /></svg></ViewButton>
        <ZoomButton aria-label="Zoom out"><svg width="9" height="9" stroke="#444"><path d="M0 4.500h9" /></svg></ZoomButton>
        <ZoomSlider type="range" aria-label="Zoom" defaultValue={50} />
        <ZoomButton aria-label="Zoom in"><svg width="9" height="9" stroke="#444"><path d="M0 4.500h9M4.500 0v9" /></svg></ZoomButton>
        <ZoomValue>100%</ZoomValue>
      </StatusBar>

      <Taskbar>
        <StartButton aria-label="Start">
          <svg width="16" height="16" fill="#fff"><path d="M0 2.300L6.500 1.400V7.600H0ZM7.400 1.300L16 0V7.600H7.400ZM0 8.500H6.500V14.700L0 13.800ZM7.400 8.500H16V16L7.400 14.800Z" /></svg>
        </StartButton>
        <TaskSearch>
          <Magnifier size={17} />
          <TaskInput placeholder="Type here to search" aria-label="Type here to search" />
          <Stegosaurus />
        </TaskSearch>
        <TaskApps>
          <TaskApp $gap aria-label="Task view"><TaskView /></TaskApp>
          <TaskApp aria-label="Private browser"><MaskApp /></TaskApp>
          <TaskApp aria-label="RStudio"><RApp /></TaskApp>
          <TaskApp $open aria-label="File Explorer"><FolderApp /></TaskApp>
          <TaskApp aria-label="Edge"><EdgeApp /></TaskApp>
          <TaskApp $open aria-label="Sublime Text"><SublimeApp /></TaskApp>
          <TaskApp aria-label="Acrobat"><AcrobatApp /></TaskApp>
          <TaskApp aria-label="Firefox"><FirefoxApp /></TaskApp>
          <TaskApp $open aria-label="Settings"><GearApp /></TaskApp>
          <TaskApp $open aria-label="Chrome"><ChromeApp /></TaskApp>
          <TaskApp $open aria-label="VS Code"><CodeApp /></TaskApp>
          <TaskApp $open aria-label="WhatsApp"><WhatsAppIcon /></TaskApp>
          <TaskApp $active aria-label="Excel"><ExcelApp /></TaskApp>
        </TaskApps>
        <Tray>
          <Weather>
            <svg width="25" height="24"><path d="M10 0C13 5 10 9 3 10C7 15 16 12 15 5C14 2 12 1 10 0Z" fill="#f5a623" />
              <path d="M5 23C-1 23-1 15 5 15C7 8 16 7 18 13C26 12 27 23 20 23Z" fill="#b9d3f7" /></svg>
            18°C
          </Weather>
          <TrayIcons>
            <svg width="12" height="7" fill="none" stroke="#fff" strokeWidth="1.300"><path d="M.5 6.500l5.500-5.500l5.500 5.500" /></svg>
            <svg width="13" height="13" fill="none" stroke="#ddd" strokeWidth="1.200"><path d="M1 12A11 11 0 0 1 12 1M4 12A8 8 0 0 1 12 4.500M7 12A5 5 0 0 1 12 7.500" /><circle cx="11" cy="11" r="1.500" fill="#fff" /></svg>
            <svg width="15" height="9" fill="none" stroke="#fff"><path d="M.5 .5h12v8H.5ZM14.500 3v3" /><path d="M2 2h5v5H2Z" fill="#fff" /></svg>
            <svg width="17" height="13" fill="none" stroke="#fff"><path d="M.5 4.500h2l3.500-3.500v11L2.500 8.500H.5ZM8.500 4q2 2.500 0 5M11 2q3.500 4.500 0 9" /><path d="M13.500 .5q4.500 6 0 12" stroke="#777" /></svg>
          </TrayIcons>
          <TrayText $w={26}>ENG<br />US</TrayText>
          <TrayText $w={72}>1:25 AM<br />4/6/2023</TrayText>
          <Notice aria-label="Notifications">
            <svg width="17" height="16"><path d="M0 0h16v12H7L3 15V12H0Z" fill="#fff" /><path d="M3 3.500h10M3 6h10M3 8.500h6" stroke="#101010" /></svg>
            <NoticeCount>1</NoticeCount>
          </Notice>
        </Tray>
      </Taskbar>
    </App>
  );
}
